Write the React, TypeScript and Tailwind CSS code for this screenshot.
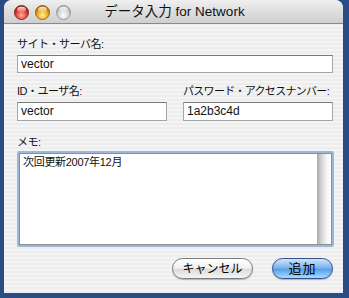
import React from "react";

const font = { fontFamily: '"Liberation Sans", "Noto Sans CJK JP", sans-serif' };

function Light({ id, c1, c2, c3, ring }: { id: string; c1: string; c2: string; c3: string; ring: string }) {
  return (
    <svg width="15" height="15" viewBox="0 0 15 15">
      <defs>
        <radialGradient id={id + "g"} cx="50%" cy="70%" r="60%">
          <stop offset="0%" stopColor={c1} />
          <stop offset="60%" stopColor={c2} />
          <stop offset="100%" stopColor={c3} />
        </radialGradient>
        <linearGradient id={id + "h"} x1="0" y1="0" x2="0" y2="1">
          <stop offset="0%" stopColor="#ffffff" stopOpacity="0.9" />
          <stop offset="100%" stopColor="#ffffff" stopOpacity="0.1" />
        </linearGradient>
      </defs>
      <circle cx="7.5" cy="7.5" r="7" fill={`url(#${id}g)`} stroke={ring} strokeWidth="1" />
      <ellipse cx="7.5" cy="4.5" rx="4.5" ry="2.8" fill={`url(#${id}h)`} />
    </svg>
  );
}

export default function App() {
  return (
    <div className="w-[349px] h-[298px] bg-[#2a4c86] overflow-hidden" style={font}>
      <div className="ml-[4px] w-[339px] h-[293px] rounded-t-[8px] overflow-hidden flex flex-col bg-[repeating-linear-gradient(0deg,#ededed_0px,#ededed_2px,#f4f4f4_2px,#f4f4f4_4px)]">
        {/* title bar */}
        <div className="h-[24px] shrink-0 relative flex items-center bg-[linear-gradient(180deg,#f0f0f0_0%,#dedede_50%,#cfcfcf_100%)] border-b border-[#8a8a8a]">
          <div className="flex gap-[6px] pl-[10px] pt-[1px]">
            <Light id="r" c1="#ffb0a0" c2="#e04a3c" c3="#a01810" ring="#8a2a22" />
            <Light id="y" c1="#fff2a0" c2="#f0b020" c3="#b06a00" ring="#9a6a10" />
            <Light id="g" c1="#ffffff" c2="#d6d6d6" c3="#a8a8a8" ring="#9a9a9a" />
          </div>
          <div className="absolute left-0 right-0 top-0 h-[24px] flex items-center justify-center pl-[2px] text-[13.5px] text-[#111]">
            データ入力 for Network
          </div>
        </div>
        {/* body */}
        <div className="flex flex-col pl-[13px] pr-[10px] pt-[14px] text-[11px] text-[#111] tracking-[-0.5px]">
          <div className="h-[13px] leading-[13px] whitespace-nowrap">サイト・サーバ名:</div>
          <div className="mt-[4px] h-[18px] w-[316px] bg-white border border-[#a5a5a5] border-t-[#7a7a7a] text-[12px] leading-[16px] pl-[3px] tracking-normal">
            vector
          </div>
          <div className="mt-[12px] flex gap-[16px]">
            <div className="flex flex-col w-[150px]">
              <div className="h-[13px] leading-[13px] whitespace-nowrap">ID・ユーザ名:</div>
              <div className="mt-[4px] h-[19px] bg-white border border-[#a5a5a5] border-t-[#7a7a7a] text-[12px] leading-[17px] pl-[3px] tracking-normal">
                vector
              </div>
            </div>
            <div className="flex flex-col w-[150px]">
              <div className="h-[13px] leading-[13px] whitespace-nowrap tracking-[-0.7px]">パスワード・アクセスナンバー:</div>
              <div className="mt-[4px] h-[19px] bg-white border border-[#a5a5a5] border-t-[#7a7a7a] text-[12px] leading-[17px] pl-[3px] tracking-normal">
                1a2b3c4d
              </div>
            </div>
          </div>
          <div className="mt-[15px] h-[13px] leading-[13px]">メモ:</div>
          <div className="mt-[2px] h-[96px] w-[317px] rounded-[2px] border-[2px] border-[#9ab8dc] flex">
            <div className="flex-1 flex bg-white border border-[#8e8e8e]">
              <div className="flex-1 text-[11px] leading-[14px] pl-[3px] pt-[1px] tracking-[-0.3px]">次回更新2007年12月</div>
              <div className="w-[14px] bg-[linear-gradient(90deg,#a8a8a8_0%,#d8d8d8_35%,#f6f6f6_70%,#ffffff_100%)]" />
            </div>
          </div>
          <div className="mt-[11px] flex justify-end gap-[19px] tracking-normal">
            <div className="w-[81px] h-[21px] rounded-full border border-[#7c7c7c] bg-[linear-gradient(180deg,#ffffff_0%,#f2f2f2_45%,#dcdcdc_55%,#f4f4f4_100%)] shadow-[0_1px_1px_rgba(0,0,0,0.25)] flex items-center justify-center text-[12px] text-black">
              キャンセル
            </div>
            <div className="w-[61px] h-[21px] rounded-full border border-[#2f4f8f] bg-[linear-gradient(180deg,#cfe6fb_0%,#7fb4ec_45%,#5aa0e8_55%,#a6dcff_100%)] shadow-[0_1px_1px_rgba(0,0,0,0.25)] flex items-center justify-center text-[13px] tracking-[1px] text-black">
              追加
            </div>
          </div>
        </div>
      </div>
    </div>
  );
}
